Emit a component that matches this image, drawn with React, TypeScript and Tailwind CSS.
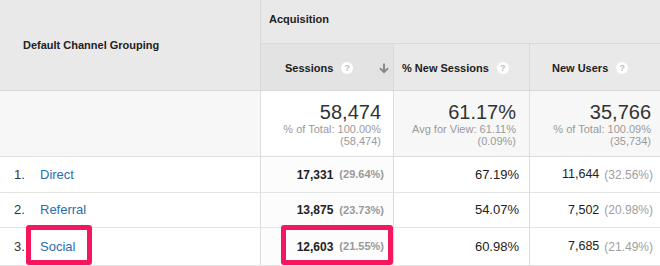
import React from "react";

const Help = () => (
  <span className="inline-flex h-[12px] w-[12px] items-center justify-center rounded-full bg-white text-[9px] font-bold leading-none text-[#bdbdbd]">
    ?
  </span>
);

const SortArrow = () => (
  <svg width="10" height="11" viewBox="0 0 10 11" className="text-[#8a8a8a]">
    <path d="M5 0.5v8.5M1 5.2l4 4 4-4" fill="none" stroke="currentColor" strokeWidth="2" />
  </svg>
);

const rows = [
  { n: "1.", name: "Direct", sessions: "17,331", sPct: "(29.64%)", newPct: "67.19%", users: "11,644", uPct: "(32.56%)" },
  { n: "2.", name: "Referral", sessions: "13,875", sPct: "(23.73%)", newPct: "54.07%", users: "7,502", uPct: "(20.98%)" },
  { n: "3.", name: "Social", sessions: "12,603", sPct: "(21.55%)", newPct: "60.98%", users: "7,685", uPct: "(21.49%)" },
];

const rowHeights = ["h-[36px]", "h-[35px]", "h-[38px]"];

export default function App() {
  return (
    <div className="relative h-[266px] w-[660px] overflow-hidden bg-white font-['Liberation_Sans',Arial,sans-serif] text-[#222]">
      <div className="grid grid-cols-[260px_133px_136px_131px] grid-rows-[44px_47px_66px_36px_35px_38px]">
        {/* Header */}
        <div className="row-span-2 flex items-center border-b border-[#d9d9d9] bg-[#e9e9e9] pl-[23px] text-[11px] font-bold">
          Default Channel Grouping
        </div>
        <div className="col-span-3 flex items-center border-b border-l border-[#d9d9d9] bg-[#e9e9e9] pl-[8px] pb-[5px] text-[11px] font-bold">
          Acquisition
        </div>
        <div className="flex items-center border-b border-l border-[#d9d9d9] bg-[#e3e3e3] pl-[24px] pr-[4px] pt-[2px] text-[11px] font-bold">
          <span>Sessions</span>
          <span className="ml-[8px] flex"><Help /></span>
          <span className="ml-auto flex"><SortArrow /></span>
        </div>
        <div className="flex items-center border-b border-l border-[#d9d9d9] bg-[#e9e9e9] pl-[8px] pt-[2px] text-[11px] font-bold">
          <span>% New Sessions</span>
          <span className="ml-[8px] flex"><Help /></span>
        </div>
        <div className="flex items-center border-b border-l border-[#d9d9d9] bg-[#e9e9e9] pl-[22px] pt-[2px] text-[11px] font-bold">
          <span>New Users</span>
          <span className="ml-[8px] flex"><Help /></span>
        </div>

        {/* Totals */}
        <div className="border-b border-[#e2e2e2] bg-[#f7f7f7]" />
        <div className="flex flex-col items-end justify-center border-b border-l border-[#dcdcdc] bg-white pr-[12px] pt-[1px]">
          <div className="text-[20px] leading-[22px] text-[#333]">58,474</div>
          <div className="text-[11px] leading-[12px] text-[#9a9a9a]">% of Total: 100.00%</div>
          <div className="text-[11px] leading-[12px] text-[#9a9a9a]">(58,474)</div>
        </div>
        <div className="flex flex-col items-end justify-center border-b border-l border-[#dcdcdc] bg-[#f7f7f7] pr-[13px] pt-[1px]">
          <div className="text-[20px] leading-[22px] text-[#333]">61.17%</div>
          <div className="text-[11px] leading-[12px] text-[#9a9a9a]">Avg for View: 61.11%</div>
          <div className="text-[11px] leading-[12px] text-[#9a9a9a]">(0.09%)</div>
        </div>
        <div className="flex flex-col items-end justify-center border-b border-l border-[#dcdcdc] bg-[#f7f7f7] pr-[9px] pt-[1px]">
          <div className="text-[20px] leading-[22px] text-[#333]">35,766</div>
          <div className="text-[11px] leading-[12px] text-[#9a9a9a]">% of Total: 100.09%</div>
          <div className="text-[11px] leading-[12px] text-[#9a9a9a]">(35,734)</div>
        </div>

        {/* Rows */}
        {rows.map((r, i) => (
          <React.Fragment key={r.name}>
            <div className={`${rowHeights[i]} flex items-center border-b border-[#e4e4e4] text-[13px]`}>
              <span className="w-[40px] pl-[14px] text-[#333]">{r.n}</span>
              <span className="text-[#2b6cb3]">{r.name}</span>
            </div>
            <div className={`${rowHeights[i]} flex items-center justify-end gap-[6px] border-b border-l border-[#e4e4e4] border-l-[#dcdcdc] bg-[#fcfcfc] pr-[9px]`}>
              <span className="text-[12px] font-bold text-[#222]">{r.sessions}</span>
              <span className="text-[11px] font-bold text-[#999]">{r.sPct}</span>
            </div>
            <div className={`${rowHeights[i]} flex items-center justify-end border-b border-l border-[#e4e4e4] border-l-[#dcdcdc] pr-[10px] text-[13px] text-[#222]`}>
              {r.newPct}
            </div>
            <div className={`${rowHeights[i]} flex items-center justify-end gap-[5px] border-b border-l border-[#e4e4e4] border-l-[#dcdcdc] pr-[7px]`}>
              <span className="text-[12.5px] text-[#222]">{r.users}</span>
              <span className="text-[12px] text-[#a0a0a0]">{r.uPct}</span>
            </div>
          </React.Fragment>
        ))}
      </div>

      {/* Highlight boxes */}
      <div className="absolute left-[26px] top-[225px] h-[40px] w-[66px] rounded-[3px] border-[5px] border-[#f5175d]" />
      <div className="absolute left-[281px] top-[225px] h-[40px] w-[112px] rounded-[3px] border-[5px] border-[#f5175d]" />
    </div>
  );
}
